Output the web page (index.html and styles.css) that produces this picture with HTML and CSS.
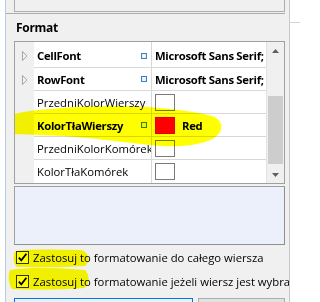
FILE: index.html
```html
<!DOCTYPE html>
<html>
<head>
<meta charset="utf-8">
<link rel="stylesheet" href="styles.css">
</head>
<body>
<div class="window">
  <div class="edge"></div>
  <div class="panel">
    <div class="topbox"></div>
    <div class="topline"></div>
    <div class="label">Format</div>
    <div class="grid">
      <div class="rows">
        <div class="row first">
          <div class="gut"><svg class="tri" width="6" height="10" viewBox="0 0 6 10"><polygon points="0.5,0.5 5,5 0.5,9.5" fill="none" stroke="#a6a6a6"/></svg></div>
          <div class="name b">CellFont<span class="mod"></span></div>
          <div class="val b">Microsoft Sans Serif;</div>
        </div>
        <div class="row">
          <div class="gut"><svg class="tri" width="6" height="10" viewBox="0 0 6 10"><polygon points="0.5,0.5 5,5 0.5,9.5" fill="none" stroke="#a6a6a6"/></svg></div>
          <div class="name b">RowFont<span class="mod"></span></div>
          <div class="val b">Microsoft Sans Serif;</div>
        </div>
        <div class="row">
          <div class="gut"></div>
          <div class="name">PrzedniKolorWierszy</div>
          <div class="val"><span class="swatch"></span></div>
        </div>
        <div class="row">
          <div class="gut"></div>
          <div class="name b">KolorTłaWierszy<span class="mod"></span></div>
          <div class="val b"><span class="swatch red"></span><span class="colname">Red</span></div>
        </div>
        <div class="row">
          <div class="gut"></div>
          <div class="name">PrzedniKolorKomórek</div>
          <div class="val"><span class="swatch"></span></div>
        </div>
        <div class="row">
          <div class="gut"></div>
          <div class="name">KolorTłaKomórek</div>
          <div class="val"><span class="swatch"></span></div>
        </div>
      </div>
      <div class="scroll">
        <div class="arrow"><svg width="7" height="4" viewBox="0 0 7 4"><polygon points="0,4 3.5,0 7,4" fill="#606060"/></svg></div>
        <div class="track"><div class="thumb"></div></div>
        <div class="arrow"><svg width="7" height="4" viewBox="0 0 7 4"><polygon points="0,0 3.5,4 7,0" fill="#606060"/></svg></div>
      </div>
    </div>
    <div class="desc"></div>
    <div class="check">
      <span class="box"><svg width="11" height="11" viewBox="0 0 11 11"><path d="M1.8,5.6 L4.3,8.4 L9.4,1.8" fill="none" stroke="#000" stroke-width="1.8"/></svg></span>
      <span class="ctext">Zastosuj to formatowanie do całego wiersza</span>
    </div>
    <div class="check">
      <span class="box"><svg width="11" height="11" viewBox="0 0 11 11"><path d="M1.8,5.6 L4.3,8.4 L9.4,1.8" fill="none" stroke="#000" stroke-width="1.8"/></svg></span>
      <span class="ctext">Zastosuj to formatowanie jeżeli wiersz jest wybrany</span>
    </div>
    <div class="buttons">
      <div class="btn primary"></div>
      <div class="btn"></div>
    </div>
  </div>
  <div class="side"><div class="sideline"></div></div>
</div>
<svg class="marker" width="300" height="302" viewBox="0 0 300 302">
  <path d="M15,114 C30,110 60,107 110,106 C150,106 190,110 212,116 C224,120 224,132 214,138 C200,146 175,148 150,145 C120,142 80,136 40,135 L15,134 Z" fill="#ffff00"/>
  <path d="M15,252 C15,249 40,249 80,250 C89,251 91,262 85,266 C60,268 30,267 17,267 C13,264 13,255 15,252 Z" fill="#ffff00"/>
  <path d="M10,270 C30,267 60,268 85,270 C90,275 90,285 84,288 C60,290 30,290 12,289 C8,283 8,274 10,270 Z" fill="#ffff00"/>
</svg>
</body>
</html>
```

FILE: styles.css
```css
* { box-sizing: border-box; }
html, body { margin: 0; padding: 0; background: #fff; }
body {
  position: relative;
  width: 300px;
  height: 302px;
  overflow: hidden;
  font-family: "Open Sans", "Noto Sans", sans-serif;
  font-size: 11.3px;
  color: #000;
}
.window { display: flex; height: 302px; }
.edge { width: 5px; flex: none; background: #fff; }
.panel {
  width: 285px;
  flex: none;
  background: #f0f0f0;
  border-left: 1px solid #b5cde6;
  border-right: 1px solid #c9c9c9;
  padding: 0 4px 0 8px;
  display: flex;
  flex-direction: column;
  overflow: hidden;
}
.side { flex: 1; background: #fff; padding-top: 22px; }
.sideline { height: 1px; background: #d4d4d4; }

.topbox { height: 12px; flex: none; border: 1px solid #adadad; border-top: none; }
.topline { height: 1px; flex: none; background: #adadad; margin: 1px 0 0 -8px; }
.label {
  margin-top: 6px;
  padding-left: 2px;
  height: 16px;
  line-height: 16px;
  font-weight: bold;
  font-size: 12px;
  letter-spacing: -0.3px;
  flex: none;
}

.grid {
  margin-top: 5px;
  height: 143px;
  flex: none;
  display: flex;
  border: 1px solid #a0a0a0;
  background: #fff;
}
.rows { flex: 1; display: flex; flex-direction: column; }
.row { display: flex; height: 23px; flex: none; }
.row.first { height: 26px; }
.gut { width: 19px; flex: none; background: #f0f0f0; display: flex; align-items: center; padding-left: 7px; }
.row.first .gut { padding-top: 2px; }
.name, .val {
  display: flex;
  align-items: center;
  border-bottom: 1px solid #d8d8d8;
  padding-left: 3px;
  white-space: nowrap;
  overflow: hidden;
}
.row.first .name, .row.first .val { padding-top: 2px; }
.row:last-child .name, .row:last-child .val { border-bottom: none; }
.name { width: 118px; flex: none; border-right: 1px solid #d8d8d8; }
.val { flex: 1; }
.b { font-weight: bold; letter-spacing: -0.3px; }
.mod {
  width: 6px; height: 6px;
  margin-left: auto; margin-right: 4px;
  border: 1px solid #3b82c4;
  background: #eaf3fb;
  flex: none;
}
.swatch {
  width: 20px; height: 17px;
  border: 1px solid #7a7a7a;
  background: #fff;
  flex: none;
}
.swatch.red { background: #ff0000; border-color: #e00000; }
.colname { margin-left: 7px; }

.scroll {
  width: 18px;
  flex: none;
  border-left: 1px solid #e2e2e2;
  background: #f0f0f0;
  display: flex;
  flex-direction: column;
}
.arrow { height: 17px; flex: none; display: flex; align-items: center; justify-content: center; }
.track { flex: 1; padding: 0 1px; }
.thumb { margin-top: 37px; height: 68px; background: #cdcdcd; }

.desc {
  margin-top: 2px;
  height: 59px;
  flex: none;
  border: 1px solid #a0a0a0;
  border-right-color: #8f8f8f;
  border-bottom-color: #8f8f8f;
  background: #ebf0fa;
}
.check { height: 24px; flex: none; display: flex; align-items: center; white-space: nowrap; }
.box {
  width: 13px; height: 13px;
  margin-left: 2px;
  border: 1px solid #333;
  background: #fff;
  display: flex; align-items: center; justify-content: center;
  flex: none;
}
.ctext { margin-left: 4px; flex: none; }

.buttons { margin-top: 5px; display: flex; gap: 5px; flex: none; }
.btn { height: 23px; border: 1px solid #adadad; background: #e1e1e1; flex: 1; }
.btn.primary { width: 179px; flex: none; border-color: #0078d7; background: #e5f1fb; }

.marker {
  position: absolute;
  top: 0; left: 0;
  pointer-events: none;
  mix-blend-mode: multiply;
}
```
